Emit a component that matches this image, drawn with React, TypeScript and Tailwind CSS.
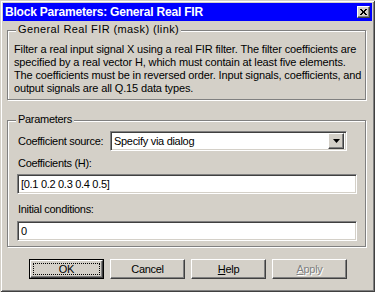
import React from 'react';

const font = { fontFamily: '"Liberation Sans", Arial, sans-serif' };

const raised =
  'border border-t-white border-l-white border-b-[#404040] border-r-[#404040] shadow-[inset_-1px_-1px_0_#808080]';
const sunken =
  'border border-t-[#808080] border-l-[#808080] border-b-white border-r-white shadow-[inset_1px_1px_0_#404040,inset_-1px_-1px_0_#d4d0c8]';

const GroupBox = ({
  label,
  labelClass = '',
  className,
  children,
}: {
  label: string;
  labelClass?: string;
  className: string;
  children: React.ReactNode;
}) => (
  <div className={`relative ml-[4px] w-[359px] border border-[#808080] shadow-[1px_1px_0_#fff,inset_1px_1px_0_#fff] ${className}`}>
    <span className={`absolute -top-[8px] left-[8px] whitespace-nowrap bg-[#d4d0c8] px-[2px] leading-[13px] ${labelClass}`}>
      {label}
    </span>
    {children}
  </div>
);

const Button = ({ children, primary, disabled }: { children: React.ReactNode; primary?: boolean; disabled?: boolean }) => {
  if (primary) {
    return (
      <div className="h-[20px] w-[75px] border border-black">
        <div className={`flex h-full w-full p-[2px] ${raised}`}>
          <span className="flex flex-1 items-center justify-center border border-dotted border-black">{children}</span>
        </div>
      </div>
    );
  }
  return (
    <div
      className={`flex h-[20px] w-[75px] items-center justify-center ${raised} ${
        disabled ? 'text-[#808080] [text-shadow:1px_1px_0_#fff]' : ''
      }`}
    >
      {children}
    </div>
  );
};

export default function App() {
  return (
    <div
      className="h-[292px] w-[375px] bg-[#d4d0c8] p-[3px] text-[11px] tracking-[-0.3px] text-black shadow-[inset_1px_1px_0_#d4d0c8,inset_-1px_-1px_0_#404040,inset_2px_2px_0_#fff,inset_-2px_-2px_0_#808080]"
      style={font}
    >
      {/* title bar */}
      <div className="flex h-[18px] items-center justify-between bg-[#0000ff] pl-[2px] pr-[2px]">
        <span className="text-[12px] font-bold tracking-[-0.2px] text-white">Block Parameters: General Real FIR</span>
        <div className={`flex h-[12px] w-[13px] items-center justify-center bg-[#d4d0c8] ${raised}`}>
          <svg width="7" height="6" viewBox="0 0 7 6">
            <path d="M0 0L6 6M1 0L7 6M6 0L0 6M7 0L1 6" stroke="black" strokeWidth="1" />
          </svg>
        </div>
      </div>

      <div className="mt-[9px]">
        <GroupBox label="General Real FIR (mask) (link)" labelClass="tracking-[0.4px]" className="h-[70px]">
          <p className="whitespace-nowrap pl-[6px] pt-[12px] leading-[13px] tracking-[-0.14px]">
            Filter a real input signal X using a real FIR filter. The filter coefficients are
            <br />
            specified by a real vector H, which must contain at least five elements.
            <br />
            The coefficients must be in reversed order. Input signals, coefficients, and
            <br />
            output signals are all Q.15 data types.
          </p>
        </GroupBox>

        <GroupBox label="Parameters" className="mt-[20px] h-[127px]">
          <div className="ml-[10px] mt-[10px] flex items-center">
            <span className="w-[92px] whitespace-nowrap">Coefficient source:</span>
            <div className={`flex h-[20px] w-[237px] items-center justify-between bg-white pl-[3px] pr-[2px] ${sunken}`}>
              <span>Specify via dialog</span>
              <div className={`flex h-[16px] w-[16px] items-center justify-center bg-[#d4d0c8] ${raised}`}>
                <svg width="7" height="4" viewBox="0 0 7 4">
                  <path d="M0 0H7L3.5 4Z" fill="black" />
                </svg>
              </div>
            </div>
          </div>

          <div className="ml-[10px] mt-[6px] leading-[13px]">Coefficients (H):</div>
          <div className={`ml-[9px] mt-[4px] flex h-[20px] w-[340px] items-center bg-white pl-[3px] ${sunken}`}>
            [0.1 0.2 0.3 0.4 0.5]
          </div>

          <div className="ml-[10px] mt-[9px] leading-[13px]">Initial conditions:</div>
          <div className={`ml-[9px] mt-[5px] flex h-[20px] w-[340px] items-center bg-white pl-[3px] ${sunken}`}>
            0
          </div>
        </GroupBox>

        <div className="ml-[26px] mt-[12px] flex gap-[6px]">
          <Button primary>OK</Button>
          <Button>Cancel</Button>
          <Button>
            <span>
              <u>H</u>elp
            </span>
          </Button>
          <Button disabled>
            <span>
              <u>A</u>pply
            </span>
          </Button>
        </div>
      </div>
    </div>
  );
}
